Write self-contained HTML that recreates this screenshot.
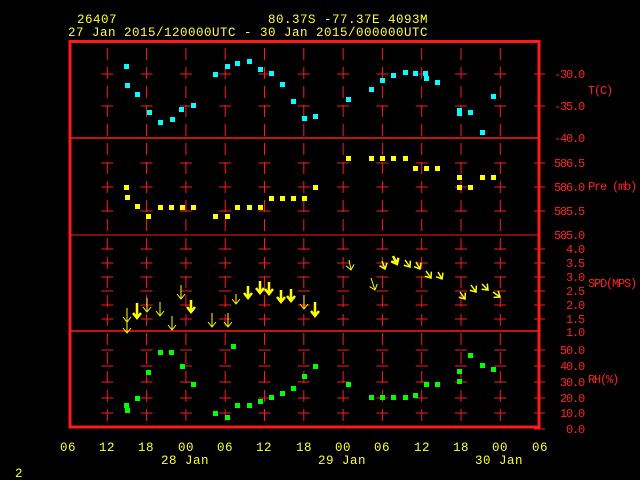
<!DOCTYPE html>
<html><head><meta charset="utf-8"><style>
html,body{margin:0;padding:0;background:#000;width:640px;height:480px;overflow:hidden}
svg{display:block}
text{font-family:"Liberation Mono","DejaVu Sans Mono",monospace;font-size:12.5px;letter-spacing:0.5px}
.y{fill:#ffff33}.r{fill:#ff2020}
.sm text{font-size:12px;letter-spacing:-1.2px}
</style></head><body>
<svg id="s" width="640" height="480" viewBox="0 0 640 480">
<g id="grid" stroke="#ff1a1a" stroke-width="1"></g>
<rect x="70" y="41.5" width="469" height="385.5" fill="none" stroke="#ff1a1a" stroke-width="3"/>
<line x1="70" y1="138" x2="540" y2="138" stroke="#ff1a1a" stroke-width="1.5"/>
<line x1="70" y1="235" x2="540" y2="235" stroke="#ff1a1a" stroke-width="1"/>
<line x1="70" y1="331" x2="540" y2="331" stroke="#ff1a1a" stroke-width="1.5"/>
<g id="data"></g>
<g class="y">
<text x="77" y="23">26407</text>
<text x="268" y="23">80.37S  -77.37E  4093M</text>
<text x="68" y="36">27 Jan 2015/120000UTC - 30 Jan 2015/000000UTC</text>
<text x="68" y="451" text-anchor="middle">06</text>
<text x="107" y="451" text-anchor="middle">12</text>
<text x="146" y="451" text-anchor="middle">18</text>
<text x="186" y="451" text-anchor="middle">00</text>
<text x="225" y="451" text-anchor="middle">06</text>
<text x="264" y="451" text-anchor="middle">12</text>
<text x="304" y="451" text-anchor="middle">18</text>
<text x="343" y="451" text-anchor="middle">00</text>
<text x="382" y="451" text-anchor="middle">06</text>
<text x="422" y="451" text-anchor="middle">12</text>
<text x="461" y="451" text-anchor="middle">18</text>
<text x="500" y="451" text-anchor="middle">00</text>
<text x="540" y="451" text-anchor="middle">06</text>
<text x="185" y="464" text-anchor="middle">28 Jan</text>
<text x="342" y="464" text-anchor="middle">29 Jan</text>
<text x="499" y="464" text-anchor="middle">30 Jan</text>
<text x="15" y="477">2</text>
</g>
<g class="r sm" text-anchor="end">
<text x="584" y="78">-30.0</text><text x="584" y="110">-35.0</text><text x="584" y="142">-40.0</text>
<text x="584" y="167">586.5</text><text x="584" y="191">586.0</text><text x="584" y="215">585.5</text><text x="584" y="239">585.0</text>
<text x="584" y="253">4.0</text><text x="584" y="267">3.5</text><text x="584" y="281">3.0</text><text x="584" y="295">2.5</text><text x="584" y="309">2.0</text><text x="584" y="323">1.5</text><text x="584" y="336">1.0</text>
<text x="584" y="354">50.0</text><text x="584" y="370">40.0</text><text x="584" y="386">30.0</text><text x="584" y="402">20.0</text><text x="584" y="417">10.0</text><text x="584" y="433">0.0</text>
</g>
<g class="r sm">
<text x="588" y="94">T(C)</text>
<text x="588" y="190">Pre (mb)</text>
<text x="588" y="287">SPD(MPS)</text>
<text x="588" y="383">RH(%)</text>
</g>
</svg>
<script>
var NS="http://www.w3.org/2000/svg";
function el(p,t,a){var e=document.createElementNS(NS,t);for(var k in a)e.setAttribute(k,a[k]);p.appendChild(e);return e;}
var g=document.getElementById('grid');
var cols=[];for(var k=1;k<=11;k++)cols.push(68+39.3*k);
var rows=[74,106,163,187,211,249,263,277,291,305,319,350,366,382,398,413];
cols.forEach(function(x){
 el(g,'line',{x1:x,y1:48,x2:x,y2:427,'stroke-dasharray':'12,7'});
 rows.forEach(function(y){el(g,'line',{x1:x-6,y1:y,x2:x+6,y2:y});});
});
[74,106,163,187,211,249,263,277,291,305,319,350,366,382,398,413,429].forEach(function(y){el(g,'line',{x1:534,y1:y,x2:545,y2:y});});
var d=document.getElementById('data');
function pts(a,c){for(var i=0;i<a.length;i+=2)el(d,'rect',{x:a[i]-2,y:a[i+1]-2,width:5,height:5,fill:c});}
pts([126,66,127,85,137,94,149,112,160,122,172,119,181,109,193,105,215,74,227,66,237,63,249,61,260,69,271,73,282,84,293,101,304,118,315,116,348,99,371,89,382,80,393,75,405,72,415,73,425,73,426,78,437,82,459,110,459,113,470,112,482,132,493,96],'#00ffff');
pts([126,187,127,197,137,206,148,216,160,207,171,207,182,207,193,207,215,216,227,216,237,207,249,207,260,207,271,198,282,198,293,198,304,198,315,187,348,158,371,158,382,158,393,158,405,158,415,168,426,168,437,168,459,177,459,187,470,187,482,177,493,177],'#ffff00');
pts([126,405,127,410,137,398,148,372,160,352,171,352,182,366,193,384,215,413,227,417,233,346,237,405,249,405,260,401,271,397,282,393,293,388,304,376,315,366,348,384,371,397,382,397,393,397,405,397,415,395,426,384,437,384,459,371,459,381,470,355,482,365,493,369],'#00ff00');
var W=[[127,333,0,-16,1],[127,322,0,-14,1],[137,318,0,-15,2.5],[147,312,0,-14,1],[160,316,0,-14,1],[172,330,0,-14,1],[181,299,0,-14,1],[191,312,0,-12,2.5],[212,327,0,-14,1],[228,327,0,-14,1],[236,304,0,-10,1],[248,298,0,-12,2.5],[260,293,0,-12,2.5],[269,294,0,-12,2.5],[281,302,0,-12,2.5],[291,301,0,-12,2.5],[304,309,0,-14,1],[315,316,0,-14,2.5],[351,270,-2,-10,1],[375,290,-4,-12,1],[385,269,-3,-8,1.5],[397,264,-4,-8,2.5],[410,267,-5,-7,1.5],[420,269,-4,-7,1.5],[431,278,-5,-7,1.5],[442,279,-4,-7,1.5],[465,299,-5,-7,1.5],[476,292,-5,-7,1.5],[488,290,-6,-6,1.5],[500,297,-7,-5,1.5]];
W.forEach(function(w){var x=w[0],y=w[1];
 el(d,'line',{x1:x+w[2],y1:y+w[3],x2:x,y2:y,stroke:'#ffff00','stroke-width':w[4]});
 var L=Math.hypot(w[2],w[3]),ux=-w[2]/L,uy=-w[3]/L,h=5;
 var ax=x-ux*h,ay=y-uy*h;
 el(d,'polyline',{points:(ax-uy*h*0.8)+','+(ay+ux*h*0.8)+' '+x+','+y+' '+(ax+uy*h*0.8)+','+(ay-ux*h*0.8),fill:'none',stroke:'#ffff00','stroke-width':w[4]});
});
</script>
</body></html>
